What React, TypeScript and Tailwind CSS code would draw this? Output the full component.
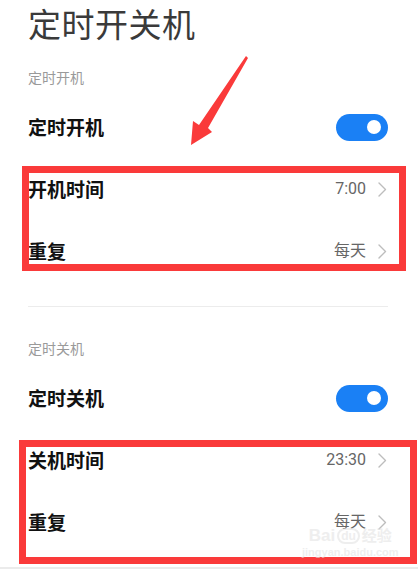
import type { ReactNode } from 'react'

const cjk = '"Noto Sans CJK SC", "Noto Sans", sans-serif'
const num = 'Roboto, "Noto Sans CJK SC", sans-serif'

const Toggle = () => (
    <div className="w-[52px] h-[27px] rounded-full bg-[#1a80f5] flex items-center justify-end pr-[7px]">
        <div className="w-[14px] h-[14px] rounded-full bg-white" />
    </div>
)

const Chevron = () => (
    <svg width="9" height="15" viewBox="0 0 9 15" fill="none">
        <path d="M1 1l6.5 6.5L1 14" stroke="#bdbdbd" strokeWidth="1.4" strokeLinecap="round" strokeLinejoin="round" />
    </svg>
)

const Row = ({ label, children }: { label: string; children: ReactNode }) => (
    <div className="h-[62px] flex items-center justify-between">
        <span className="text-[19px] font-bold text-[#111]">{label}</span>
        {children}
    </div>
)

const Value = ({ text }: { text: string }) => (
    <div className="flex items-center gap-[12px] mr-[1px]">
        <span className="text-[16px] text-[#666]" style={{ fontFamily: num }}>
            {text}
        </span>
        <Chevron />
    </div>
)

const SectionLabel = ({ text }: { text: string }) => (
    <div className="h-6 flex items-center text-[14px] text-[#9a9a9a]">{text}</div>
)

export default function App() {
    return (
        <div className="relative w-[418px] h-[569px] bg-white overflow-hidden" style={{ fontFamily: cjk }}>
            <div className="pl-[28px] pr-[30px] flex flex-col">
                <h1 className="h-12 flex items-center text-[33px] font-normal text-[#3a3a3a] tracking-[0.5px]">
                    定时开关机
                </h1>

                {/* 开机 */}
                <div className="mt-[17px]">
                    <SectionLabel text="定时开机" />
                </div>
                <div className="mt-[7px]">
                    <Row label="定时开机">
                        <Toggle />
                    </Row>
                    <Row label="开机时间">
                        <Value text="7:00" />
                    </Row>
                    <Row label="重复">
                        <Value text="每天" />
                    </Row>
                </div>

                <div className="mt-[24px] h-px bg-[#ececec]" />

                {/* 关机 */}
                <div className="mt-[29px]">
                    <SectionLabel text="定时关机" />
                </div>
                <div className="mt-[7px]">
                    <Row label="定时关机">
                        <Toggle />
                    </Row>
                    <Row label="关机时间">
                        <Value text="23:30" />
                    </Row>
                    <Row label="重复">
                        <Value text="每天" />
                    </Row>
                </div>
            </div>
            <div className="absolute left-0 right-0 top-[567px] h-[2px] bg-[#ebebeb]" />

            {/* annotations */}
            <div className="absolute left-[22px] top-[166px] w-[384px] h-[105px] border-[7px] border-[#fa3a3a]" />
            <div className="absolute left-[19px] top-[440px] w-[398px] h-[124px] border-[7px] border-[#fa3a3a]" />
            <svg className="absolute left-0 top-0" width="418" height="569" viewBox="0 0 418 569">
                <polygon
                    points="246,56 248,58 208,128 212,132 191,145 193,121 199,125"
                    fill="#fa3a3a"
                />
            </svg>

            {/* watermark */}
            <div className="absolute left-[302px] top-[528px] flex flex-col items-center opacity-60 pointer-events-none">
                <div className="flex items-center gap-[2px] text-[17px] font-bold leading-[16px] text-[#e4e4e4]" style={{ fontFamily: '"Liberation Sans", "Noto Sans CJK SC", sans-serif' }}>
                    <span>Bai</span>
                    <span className="rounded-full border-2 border-[#e4e4e4] px-[2px] text-[12px] leading-[12px]">du</span>
                    <span className="text-[15px]">经验</span>
                </div>
                <div className="mt-[2px] text-[11px] leading-[12px] font-bold text-[#e4e4e4]" style={{ fontFamily: '"Liberation Sans", sans-serif' }}>
                    jingyan.baidu.com
                </div>
            </div>
        </div>
    )
}
